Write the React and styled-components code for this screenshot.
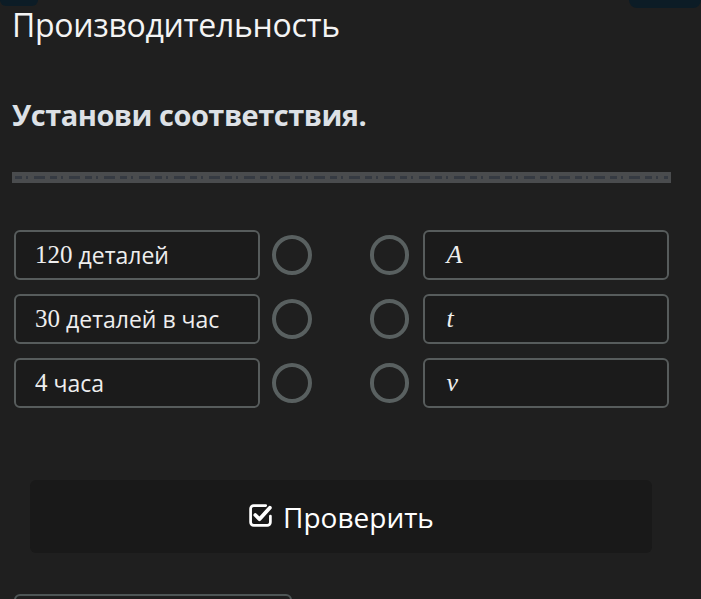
import React from 'react'
import styled, { createGlobalStyle } from 'styled-components'

const GlobalStyle = createGlobalStyle`
  html, body {
    margin: 0;
    padding: 0;
    background: #1f1f1f;
  }
  body {
    font-family: "Open Sans", "Noto Sans", sans-serif;
    color: #f2f2f2;
    overflow: hidden;
  }
`;

const Page = styled.div`
  width: 701px;
  height: 599px;
  background: #1f1f1f;
  display: flex;
  flex-direction: column;
  overflow: hidden;

  & > * {
    flex-shrink: 0;
  }
`;

const TopStrip = styled.div`
  display: flex;
  justify-content: space-between;
  height: 8px;
`;

const Corner = styled.div`
  width: ${p => p.$w}px;
  height: ${p => p.$h}px;
  background: #0c1c26;
  border-radius: 0 0 ${p => p.$r}px ${p => p.$r}px;
`;

const Title = styled.h1`
  margin: 0;
  padding: 0 12px;
  font-size: 32px;
  font-weight: 400;
  line-height: 34px;
  color: #f4f4f4;
  letter-spacing: -0.3px;
`;

const Question = styled.h2`
  margin: 55px 0 0;
  padding: 0 12px;
  font-size: 29px;
  font-weight: 700;
  line-height: 36px;
  color: #dde1e6;
  letter-spacing: -0.5px;
`;

const DashBar = styled.div`
  margin: 39px 30px 0 12px;
  height: 11px;
  background: #4a4c4e;
  display: flex;
  align-items: center;
  padding: 0 3px;

  &::after {
    content: '';
    flex: 1;
    height: 3px;
    background: repeating-linear-gradient(
      90deg,
      #353a42 0 7px,
      transparent 7px 11px,
      #353a42 11px 13px,
      transparent 13px 19px,
      #353a42 19px 30px,
      transparent 30px 35px
    );
  }
`;

const Pairs = styled.div`
  margin: 47px 32px 0 14px;
  display: flex;
  flex-direction: column;
  gap: 14px;
`;

const Row = styled.div`
  display: flex;
  align-items: center;
  height: 50px;
`;

const Option = styled.div`
  box-sizing: border-box;
  width: 246px;
  height: 50px;
  border: 2px solid #575c5c;
  border-radius: 6px;
  background: #1b1b1b;
  display: flex;
  align-items: center;
  padding-left: ${p => (p.$math ? 21 : 19)}px;
  margin-left: ${p => p.$ml || 0}px;
  font-size: 23px;
  color: #eeeeee;
`;

const Num = styled.span`
  font-family: "Liberation Serif", "DejaVu Serif", serif;
  font-size: 25px;
  margin-right: 6px;
`;

const MathVar = styled.span`
  font-family: "Liberation Serif", "DejaVu Serif", serif;
  font-style: italic;
  font-size: 26px;
`;

const Dot = styled.div`
  box-sizing: border-box;
  width: 40px;
  height: 40px;
  border-radius: 50%;
  border: 4px solid #596060;
  margin-left: ${p => p.$ml}px;
`;

const CheckButton = styled.button`
  margin: 72px 49px 0 30px;
  height: 73px;
  border: 0;
  border-radius: 6px;
  background: #191919;
  color: #ffffff;
  font-family: "Open Sans", "Noto Sans", sans-serif;
  font-size: 28px;
  display: flex;
  align-items: center;
  justify-content: center;
  gap: 10px;
  padding: 0;

  svg {
    width: 25px;
    height: 25px;
    margin-top: -2px;
  }
`;

const NextBox = styled.div`
  margin: 41px 0 0 14px;
  width: 274px;
  height: 40px;
  border: 2px solid #4e5656;
  border-radius: 6px;
`;

const CheckSquare = () => (
  <svg viewBox="0 0 24 24" fill="none" stroke="currentColor" strokeLinecap="round" strokeLinejoin="round">
    <path d="M17 2.5H5.5a3 3 0 0 0-3 3v13a3 3 0 0 0 3 3h13a3 3 0 0 0 3-3v-6" strokeWidth="2.6" />
    <path d="M7 11.5l4 4 10-11" strokeWidth="3.6" />
  </svg>
);

const pairs = [
  { num: '120', word: 'деталей', v: 'A' },
  { num: '30', word: 'деталей в час', v: 't' },
  { num: '4', word: 'часа', v: 'v' },
];

export default function App() {
  return (
    <Page>
      <GlobalStyle />
      <TopStrip>
        <Corner $w={38} $h={6} $r={6} />
        <Corner $w={72} $h={8} $r={8} />
      </TopStrip>
      <Title>Производительность</Title>
      <Question>Установи соответствия.</Question>
      <DashBar />
      <Pairs>
        {pairs.map(p => (
          <Row key={p.v}>
            <Option>
              <Num>{p.num}</Num>
              {p.word}
            </Option>
            <Dot $ml={12} />
            <Dot $ml={58} />
            <Option $math $ml={14}>
              <MathVar>{p.v}</MathVar>
            </Option>
          </Row>
        ))}
      </Pairs>
      <CheckButton>
        <CheckSquare />
        Проверить
      </CheckButton>
      <NextBox />
    </Page>
  )
}
